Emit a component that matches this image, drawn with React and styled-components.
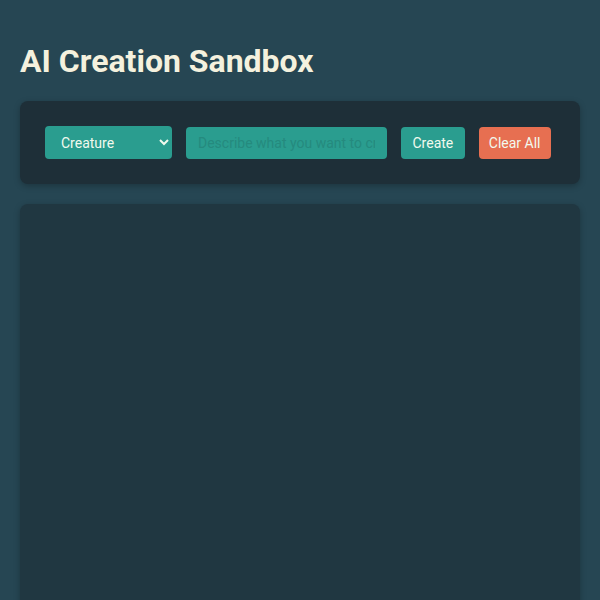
import styled, { createGlobalStyle } from "styled-components";

const GlobalStyle = createGlobalStyle`
  body {
    margin: 0;
    background-color: #264653;
    font-family: Roboto, "Liberation Sans", sans-serif;
    color: #f1faee;
  }
`;

const Page = styled.div`
  padding: 20px;
`;

const Title = styled.h1`
  font-size: 32px;
  font-weight: bold;
  margin: 22px 0 21px;
  color: #f4f1de;
`;

const Controls = styled.div`
  background-color: #1e2f38;
  border-radius: 8px;
  padding: 25px;
  display: flex;
  align-items: center;
  gap: 14px;
  box-shadow: 0 2px 6px rgba(0, 0, 0, 0.25);
`;

const Select = styled.select`
  width: 127px;
  height: 33px;
  padding: 0 10px 0 12px;
  border: 0;
  border-radius: 4px;
  background-color: #2a9d8f;
  color: #f1faee;
  font-family: inherit;
  font-size: 14px;
`;

const Input = styled.input`
  width: 201px;
  height: 32px;
  box-sizing: border-box;
  padding: 0 12px;
  border: 0;
  border-radius: 4px;
  background-color: #2a9d8f;
  color: #f1faee;
  font-family: inherit;
  font-size: 14px;

  &::placeholder {
    color: #258a7e;
  }
`;

const Button = styled.button`
  height: 32px;
  padding: 0 ${(p) => (p.$danger ? "10px" : "11.5px")};
  border: 0;
  border-radius: 4px;
  white-space: nowrap;
  background-color: ${(p) => (p.$danger ? "#e76f51" : "#2a9d8f")};
  color: #f1faee;
  font-family: inherit;
  font-size: 14px;
  cursor: pointer;
`;

const Canvas = styled.div`
  margin-top: 20px;
  height: 500px;
  background-color: #203741;
  border-radius: 8px;
  box-shadow: 0 2px 6px rgba(0, 0, 0, 0.25);
`;

const App = () => {
  return (
    <Page>
      <GlobalStyle />
      <Title>AI Creation Sandbox</Title>
      <Controls>
        <Select defaultValue="creature">
          <option value="creature">Creature</option>
          <option value="plant">Plant</option>
          <option value="object">Object</option>
        </Select>
        <Input placeholder="Describe what you want to create..." />
        <Button>Create</Button>
        <Button $danger>Clear All</Button>
      </Controls>
      <Canvas />
    </Page>
  );
};

export default App;
